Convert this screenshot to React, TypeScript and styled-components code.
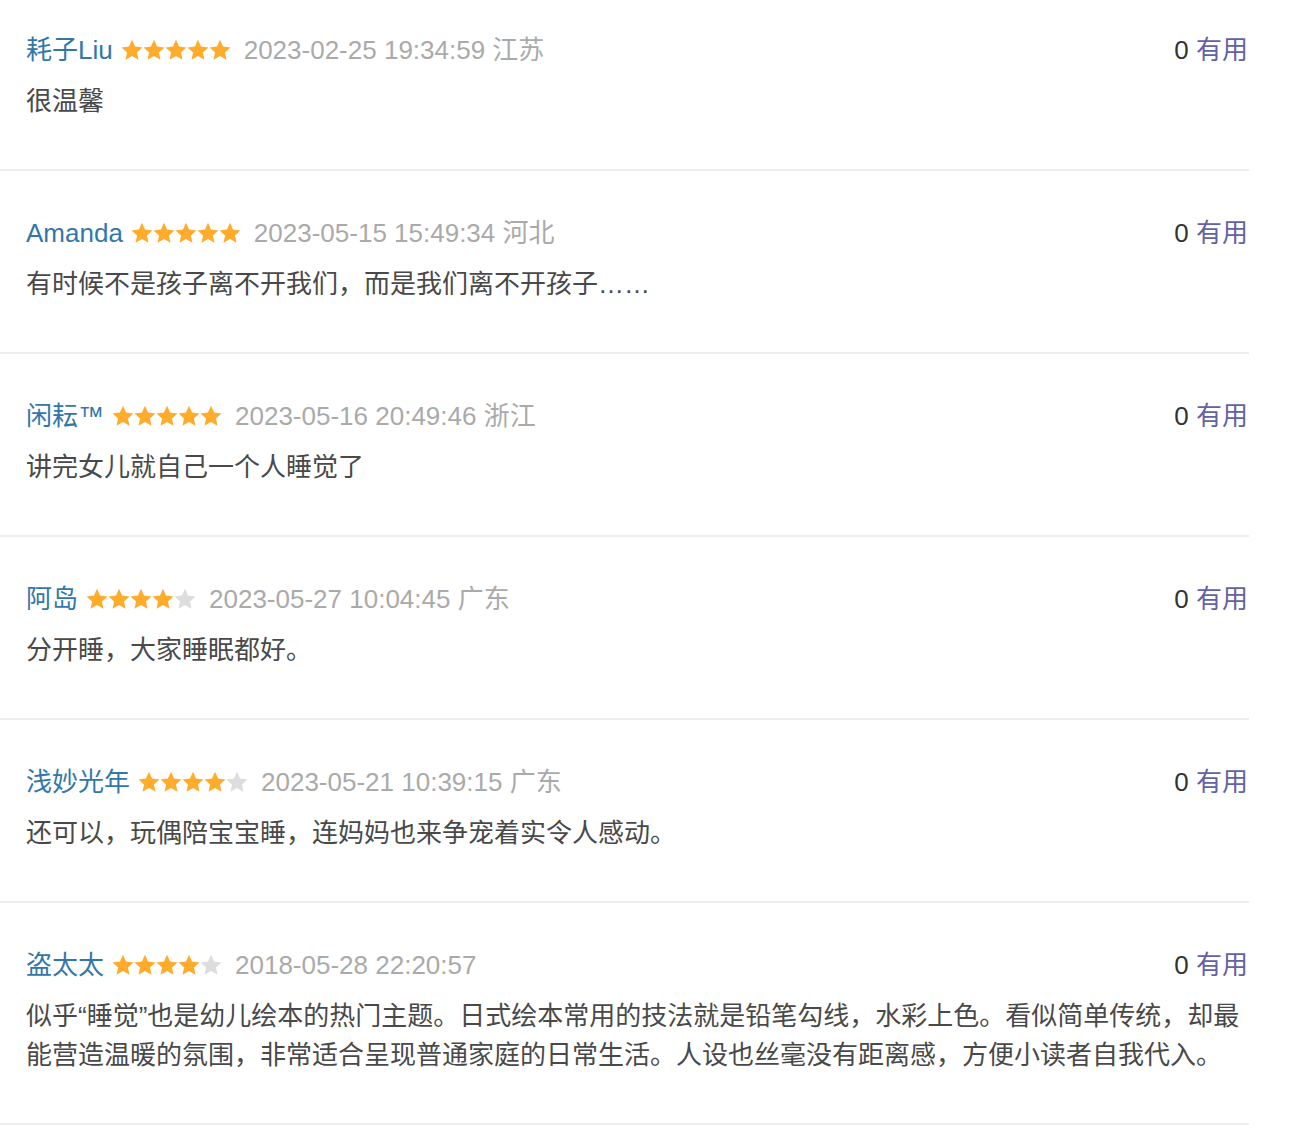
import styled, { createGlobalStyle } from "styled-components";

interface Comment {
    user: string;
    rating: number;
    time: string;
    location?: string;
    votes: number;
    content: string;
}

const comments: Comment[] = [
    { user: "耗子Liu", rating: 5, time: "2023-02-25 19:34:59", location: "江苏", votes: 0, content: "很温馨" },
    { user: "Amanda", rating: 5, time: "2023-05-15 15:49:34", location: "河北", votes: 0, content: "有时候不是孩子离不开我们，而是我们离不开孩子……" },
    { user: "闲耘™", rating: 5, time: "2023-05-16 20:49:46", location: "浙江", votes: 0, content: "讲完女儿就自己一个人睡觉了" },
    { user: "阿岛", rating: 4, time: "2023-05-27 10:04:45", location: "广东", votes: 0, content: "分开睡，大家睡眠都好。" },
    { user: "浅妙光年", rating: 4, time: "2023-05-21 10:39:15", location: "广东", votes: 0, content: "还可以，玩偶陪宝宝睡，连妈妈也来争宠着实令人感动。" },
    {
        user: "盗太太", rating: 4, time: "2018-05-28 22:20:57", votes: 0,
        content: "似乎“睡觉”也是幼儿绘本的热门主题。日式绘本常用的技法就是铅笔勾线，水彩上色。看似简单传统，却最能营造温暖的氛围，非常适合呈现普通家庭的日常生活。人设也丝毫没有距离感，方便小读者自我代入。",
    },
];

// fat five-point star, same shape as the rating sprite
const STAR_POINTS = "11,0.8 14.06,7.59 21.46,8.4 15.95,13.41 17.47,20.7 11,17 4.53,20.7 6.05,13.41 0.54,8.4 7.94,7.59";

function Stars({ rating }: { rating: number }) {
    return (
        <StarRow>
            {[0, 1, 2, 3, 4].map((i) => (
                <svg key={i} width="22" height="22" viewBox="0 0 22 22">
                    <polygon points={STAR_POINTS} fill={i < rating ? "#ffac2d" : "#dddddd"} />
                </svg>
            ))}
        </StarRow>
    );
}

export default function App() {
    return (
        <>
            <GlobalStyle />
            <List>
                {comments.map((c) => (
                    <Item key={c.user}>
                        <Header>
                            <Meta>
                                <UserName>{c.user}</UserName>
                                <Stars rating={c.rating} />
                                <Time>{c.location ? `${c.time} ${c.location}` : c.time}</Time>
                            </Meta>
                            <Votes>
                                <Count>{c.votes}</Count> <VoteLink>{'有用'}</VoteLink>
                            </Votes>
                        </Header>
                        <Content>{c.content}</Content>
                    </Item>
                ))}
            </List>
        </>
    );
}

const GlobalStyle = createGlobalStyle`
    body {
        margin: 0;
        background: #ffffff;
        font-family: "Liberation Sans", "Noto Sans CJK SC", sans-serif;
    }
`;

const List = styled.div`
    width: 1249px;
    padding-top: 30px;
`;

const Item = styled.div`
    padding: 43px 1px 48px 26px;
    border-bottom: 2px solid #eeeeee;

    &:first-child {
        padding-top: 1px;
    }
`;

const Header = styled.div`
    height: 39px;
    display: flex;
    justify-content: space-between;
    align-items: baseline;
    font-size: 26px;
    line-height: 39px;
`;

const Meta = styled.div`
    white-space: nowrap;
`;

const UserName = styled.span`
    color: #3377aa;
    margin-right: 8px;
`;

const StarRow = styled.span`
    display: inline-flex;
    margin-right: 13px;
    vertical-align: -2px;
`;

const Time = styled.span`
    color: #aaaaaa;
`;

const Votes = styled.div`
    white-space: nowrap;
`;

const Count = styled.span`
    color: #333333;
`;

const VoteLink = styled.span`
    color: #6262a4;
    cursor: pointer;
`;

const Content = styled.p`
    margin: 12px 0 0;
    font-size: 26px;
    line-height: 39px;
    color: #494949;
`;
